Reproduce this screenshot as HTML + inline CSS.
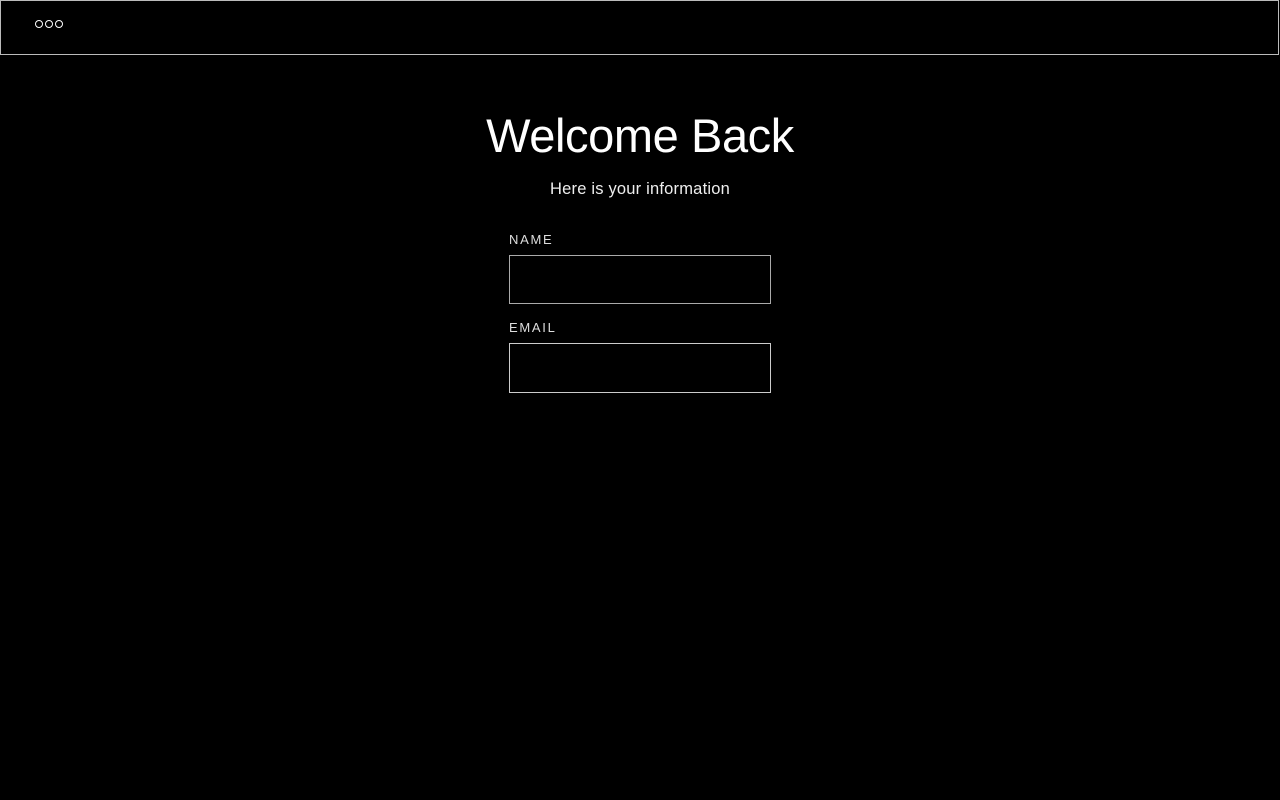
<!DOCTYPE html>
<html><head><style>
html,body{margin:0;background:#000;color:#fff;font-family:"Liberation Sans",sans-serif;width:1280px;height:800px;overflow:hidden}
.hdr{position:absolute;left:0;top:0;width:1277px;height:53px;border:1px solid #bbb}
.dot{position:absolute;top:20px;width:6px;height:6px;border:1.5px solid #fff;border-radius:50%}
h1{position:absolute;top:108px;left:0;width:1280px;text-align:center;margin:0;font-weight:400;font-size:47px;line-height:56px;letter-spacing:-0.4px}
.sub{position:absolute;top:179px;left:0;width:1280px;text-align:center;font-size:16.5px;line-height:20px;color:#eee;letter-spacing:0.2px}
.lbl{position:absolute;left:509px;font-size:13px;letter-spacing:1.7px;color:#ddd}
.in{position:absolute;left:509px;width:260px;height:47px;border:1px solid #aaa}
</style></head><body>
<div class="hdr"></div>
<div class="dot" style="left:35px"></div>
<div class="dot" style="left:45px"></div>
<div class="dot" style="left:55px"></div>
<h1>Welcome Back</h1>
<div class="sub">Here is your information</div>
<div class="lbl" style="top:232px">NAME</div>
<div class="in" style="top:255px"></div>
<div class="lbl" style="top:320px">EMAIL</div>
<div class="in" style="top:343px;height:48px;border-color:#ccc"></div>
</body></html>
